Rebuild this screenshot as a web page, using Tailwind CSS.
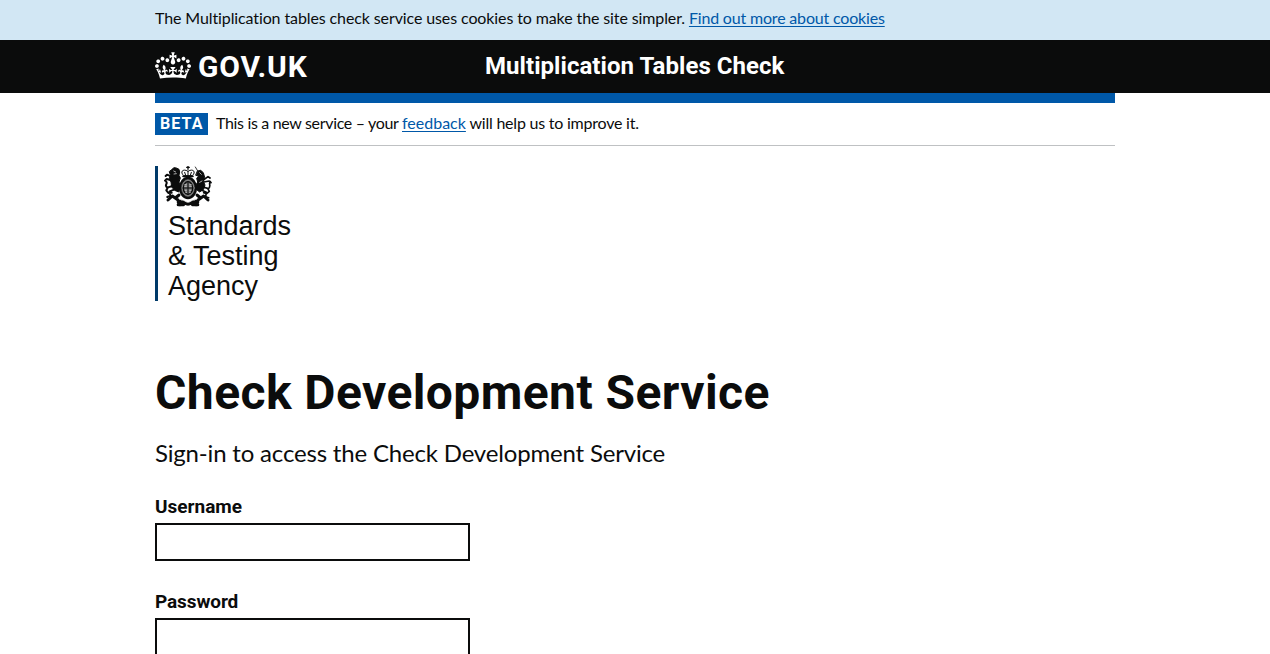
<!DOCTYPE html>
<html lang="en">
<head>
<meta charset="utf-8">
<title>Check Development Service</title>
<script src="https://cdn.jsdelivr.net/npm/@tailwindcss/browser@4"></script>
</head>
<body class="h-screen overflow-hidden bg-white font-['Lato',sans-serif] text-base text-[#0b0c0c]">
<div class="h-10 bg-[#d2e7f4]">
  <p class="mx-auto w-[960px] pt-2 leading-5 whitespace-nowrap"><span class="tracking-[-0.11px]">The Multiplication tables check service uses cookies to make the site simpler. </span><a href="#" class="tracking-[-0.18px] text-[#0058a8] underline underline-offset-2">Find out more about cookies</a></p>
</div>
<header class="h-[53px] bg-[#0b0c0c] text-white">
  <div class="mx-auto flex h-full w-[960px] font-['Roboto',sans-serif] font-bold">
    <a href="#" class="flex w-[330px] pt-3">
      <svg class="mr-[7px] h-[27px] w-9" viewBox="0 0 132 97" fill="currentColor" fill-rule="evenodd" aria-hidden="true"><path d="M25 30.2c3.5 1.5 7.7-.2 9.1-3.7 1.5-3.6-.2-7.8-3.9-9.2-3.6-1.4-7.6.3-9.1 3.9-1.4 3.5.3 7.5 3.9 9zM9 39.5c3.6 1.5 7.8-.2 9.2-3.7 1.5-3.6-.2-7.8-3.9-9.1-3.6-1.5-7.6.2-9.1 3.8-1.4 3.5.3 7.5 3.8 9zM4.4 57.2c3.5 1.5 7.7-.2 9.1-3.8 1.5-3.6-.2-7.7-3.9-9.1-3.5-1.5-7.6.3-9.1 3.8-1.4 3.5.3 7.6 3.9 9.1zm38.3-21.4c3.5 1.5 7.7-.2 9.1-3.8 1.5-3.6-.2-7.7-3.9-9.1-3.6-1.5-7.6.3-9.1 3.8-1.3 3.6.4 7.7 3.9 9.1zm64.4-5.6c-3.6 1.5-7.8-.2-9.1-3.7-1.5-3.6.2-7.8 3.8-9.2 3.6-1.4 7.7.3 9.2 3.9 1.3 3.5-.4 7.5-3.9 9zm15.9 9.3c-3.6 1.5-7.7-.2-9.1-3.7-1.5-3.6.2-7.8 3.7-9.1 3.6-1.5 7.7.2 9.2 3.8 1.5 3.5-.3 7.5-3.8 9zm4.7 17.7c-3.6 1.5-7.8-.2-9.2-3.8-1.5-3.6.2-7.7 3.9-9.1 3.6-1.5 7.7.3 9.2 3.8 1.3 3.5-.4 7.6-3.9 9.1zM89.3 35.8c-3.6 1.5-7.8-.2-9.2-3.8-1.4-3.6.2-7.7 3.9-9.1 3.6-1.5 7.7.3 9.2 3.8 1.4 3.6-.3 7.7-3.9 9.1zM69.7 17.7l8.9 4.7V9.3l-8.9 2.8c-.2-.3-.5-.6-.9-.9L72.4 0H59.6l3.5 11.2c-.3.3-.6.5-.9.9l-8.8-2.8v13.1l8.8-4.7c.3.3.6.7.9.9l-5 15.4v.1c-.2.8-.4 1.6-.4 2.4 0 4.1 3.1 7.5 7 8.1h.2c.3 0 .7.1 1 .1.4 0 .7 0 1-.1h.2c4-.6 7.1-4.1 7.1-8.1 0-.8-.1-1.7-.4-2.4V34l-5.1-15.4c.4-.2.7-.6 1-.9zM66 92.8c16.9 0 32.8 1.1 47.1 3.2 4-16.9 8.9-26.7 14-33.5l-9.6-3.4c1 4.9 1.1 7.2 0 10.2-1.5-1.4-3-4.3-4.2-8.7L108.6 76c2.8-2 5-3.2 7.5-3.3-4.4 9.4-10 11.9-13.6 11.2-4.3-.8-6.3-4.6-5.6-7.9 1-4.7 5.7-5.9 8-.5 4.3-8.7-3-11.4-7.6-8.8 7.1-7.2 7.9-13.5 2.1-21.1-8 6.1-8.1 12.3-4.5 20.8-4.7-5.4-12.1-2.5-9.5 6.2 3.4-5.2 7.9-2 7.2 3.1-.6 4.3-6.4 7.8-13.5 7.2-10.3-.9-10.9-8-11.2-13.8 2.5-.5 7.1 1.8 11 7.3L80.2 60c-4.1 4.4-8 5.3-12.3 5.4 1.4-4.4 8-11.6 8-11.6H55.5s6.4 7.2 7.9 11.6c-4.2-.1-8-1-12.3-5.4l1.4 16.4c3.9-5.5 8.5-7.7 10.9-7.3-.3 5.8-.9 12.8-11.1 13.8-7.2.6-12.9-2.9-13.5-7.2-.7-5 3.8-8.3 7.1-3.1 2.7-8.7-4.6-11.6-9.4-6.2 3.7-8.5 3.6-14.7-4.6-20.8-5.8 7.6-5 13.9 2.2 21.1-4.7-2.6-11.9.1-7.7 8.8 2.3-5.5 7.1-4.2 8.1.5.7 3.3-1.3 7.1-5.7 7.9-3.5.7-9-1.8-13.5-11.2 2.5.1 4.7 1.3 7.5 3.3l-4.7-15.4c-1.2 4.4-2.7 7.2-4.3 8.7-1.1-3-.9-5.3 0-10.2l-9.5 3.4c5 6.9 9.9 16.7 14 33.5 14.8-2.1 30.8-3.2 47.7-3.2z"/></svg>
      <span class="text-[30px] leading-[30px] tracking-[0.8px]">GOV.UK</span>
    </a>
    <span class="pt-[11px] text-2xl leading-[30px] tracking-[0.05px] whitespace-nowrap">Multiplication Tables Check</span>
  </div>
</header>
<div class="mx-auto w-[960px]">
  <div class="h-2.5 bg-[#0058a8]"></div>
  <div class="flex h-[43px] border-b border-[#bfc1c3] pt-2.5">
    <strong class="mr-2 h-[22px] w-[53px] bg-[#0058a8] pl-[5px] font-['Roboto',sans-serif] leading-[21px] font-bold tracking-[1.1px] text-white">BETA</strong>
    <p class="leading-5 whitespace-nowrap"><span class="tracking-[-0.33px]">This is a new service – your </span><a href="#" class="text-[#0058a8] underline underline-offset-2">feedback</a><span class="tracking-[-0.22px]"> will help us to improve it.</span></p>
  </div>
  <div class="mt-5 h-[135px] border-l-[3px] border-[#003a69] pl-[7px]">
    <svg class="-ml-px h-[41px] w-12" viewBox="0 0 144 123" fill="none" stroke="#0b0c0c" stroke-linecap="round" stroke-linejoin="round" aria-hidden="true">
      <!-- crown -->
      <path d="M72 1v9M68 4h8" stroke-width="4"/>
      <path d="M58 28C46 16 59 7 72 16c13-9 26 0 14 12zM72 16v12M62 19l3 9M82 19l-3 9" stroke-width="3"/>
      <path d="M57 31h30" stroke-width="5"/>
      <!-- shield and garter -->
      <ellipse cx="72" cy="66" rx="23" ry="29" fill="#777" stroke-width="9"/>
      <ellipse cx="72" cy="66" rx="14" ry="19" stroke-width="4"/>
      <ellipse cx="72" cy="66" rx="19" ry="25" stroke="#aaa" stroke-width="1.5"/>
      <path d="M72 47v39M57 66h30" stroke-width="3"/>
      <path d="M62 56h5M62 61h5M77 56h5M77 61h5M63 73h4M65 79h3M77 73h4M77 79h2" stroke="#ddd" stroke-width="2"/>
      <!-- lion -->
      <path d="M24 10l6-5 7 1 8 4 2 8-2 10 4 8-4 12 4 14-5 16-12-5-9-10-2-15-5-10 3-12-3-8z" fill="#0b0c0c" stroke-width="3"/>
      <path d="M22 31L9 26 5 30M22 43L8 39 3 44M25 60L12 64l-5 9 6 8 10-1M10 65C-2 56 14 54 6 46M32 70l-15 6 2 13-9 4" stroke-width="6"/>
      <path d="M29 15l6 3M30 24l7-1" stroke="#fff" stroke-width="2"/>
      <!-- unicorn -->
      <path d="M103 18l-9-15" stroke-width="2.5"/>
      <path d="M101 15l9-2 8 7 4 14-4 12 5 11-4 13-12 8-9-7-2-14 5-9-3-11 6-7-8-2z" fill="#0b0c0c" stroke-width="3"/>
      <path d="M118 42l14-10 6 4M119 48l17-3 5 5M117 63l14 4 5 9-8 7-9-3M132 69c12-7 0-16 7-22M112 72l15 7-2 13 9 3" stroke-width="5"/>
      <path d="M107 20l5 5M107 49l7-4" stroke="#fff" stroke-width="2"/>
      <!-- motto ribbon -->
      <path d="M12 102l13-12 17 12 6 14M132 102l-13-12-17 12-6 14M34 96l11-9M110 96L99 87" stroke-width="9"/>
      <path d="M43 108c14-7 18 6 29 6s15-13 29-6M43 116h15M86 116h15" stroke-width="10"/>
      <path d="M52 102c10-1 12 7 20 7s10-8 20-7" stroke="#fff" stroke-width="2"/>
    </svg>
    <p class="ml-[3px] pt-1 font-['Liberation_Sans',sans-serif] text-[27px] leading-[30px]">Standards<br>&amp; Testing<br>Agency</p>
  </div>
  <main>
    <h1 class="mt-[67px] font-['Roboto',sans-serif] text-5xl leading-[50px] font-bold tracking-[0.42px]">Check Development Service</h1>
    <p class="mt-5 text-2xl leading-[30px] tracking-[-0.18px]">Sign-in to access the Check Development Service</p>
    <form>
      <label for="username" class="mt-[26px] block font-['Roboto',sans-serif] text-[19px] leading-[25px] font-bold">Username</label>
      <input id="username" type="text" class="mt-1 block h-[38px] w-[315px] border-2 border-[#0b0c0c]">
      <label for="password" class="mt-7 block font-['Roboto',sans-serif] text-[19px] leading-[25px] font-bold tracking-[-0.1px]">Password</label>
      <input id="password" type="password" class="mt-1 block h-[38px] w-[315px] border-2 border-[#0b0c0c]">
    </form>
  </main>
</div>
</body>
</html>
